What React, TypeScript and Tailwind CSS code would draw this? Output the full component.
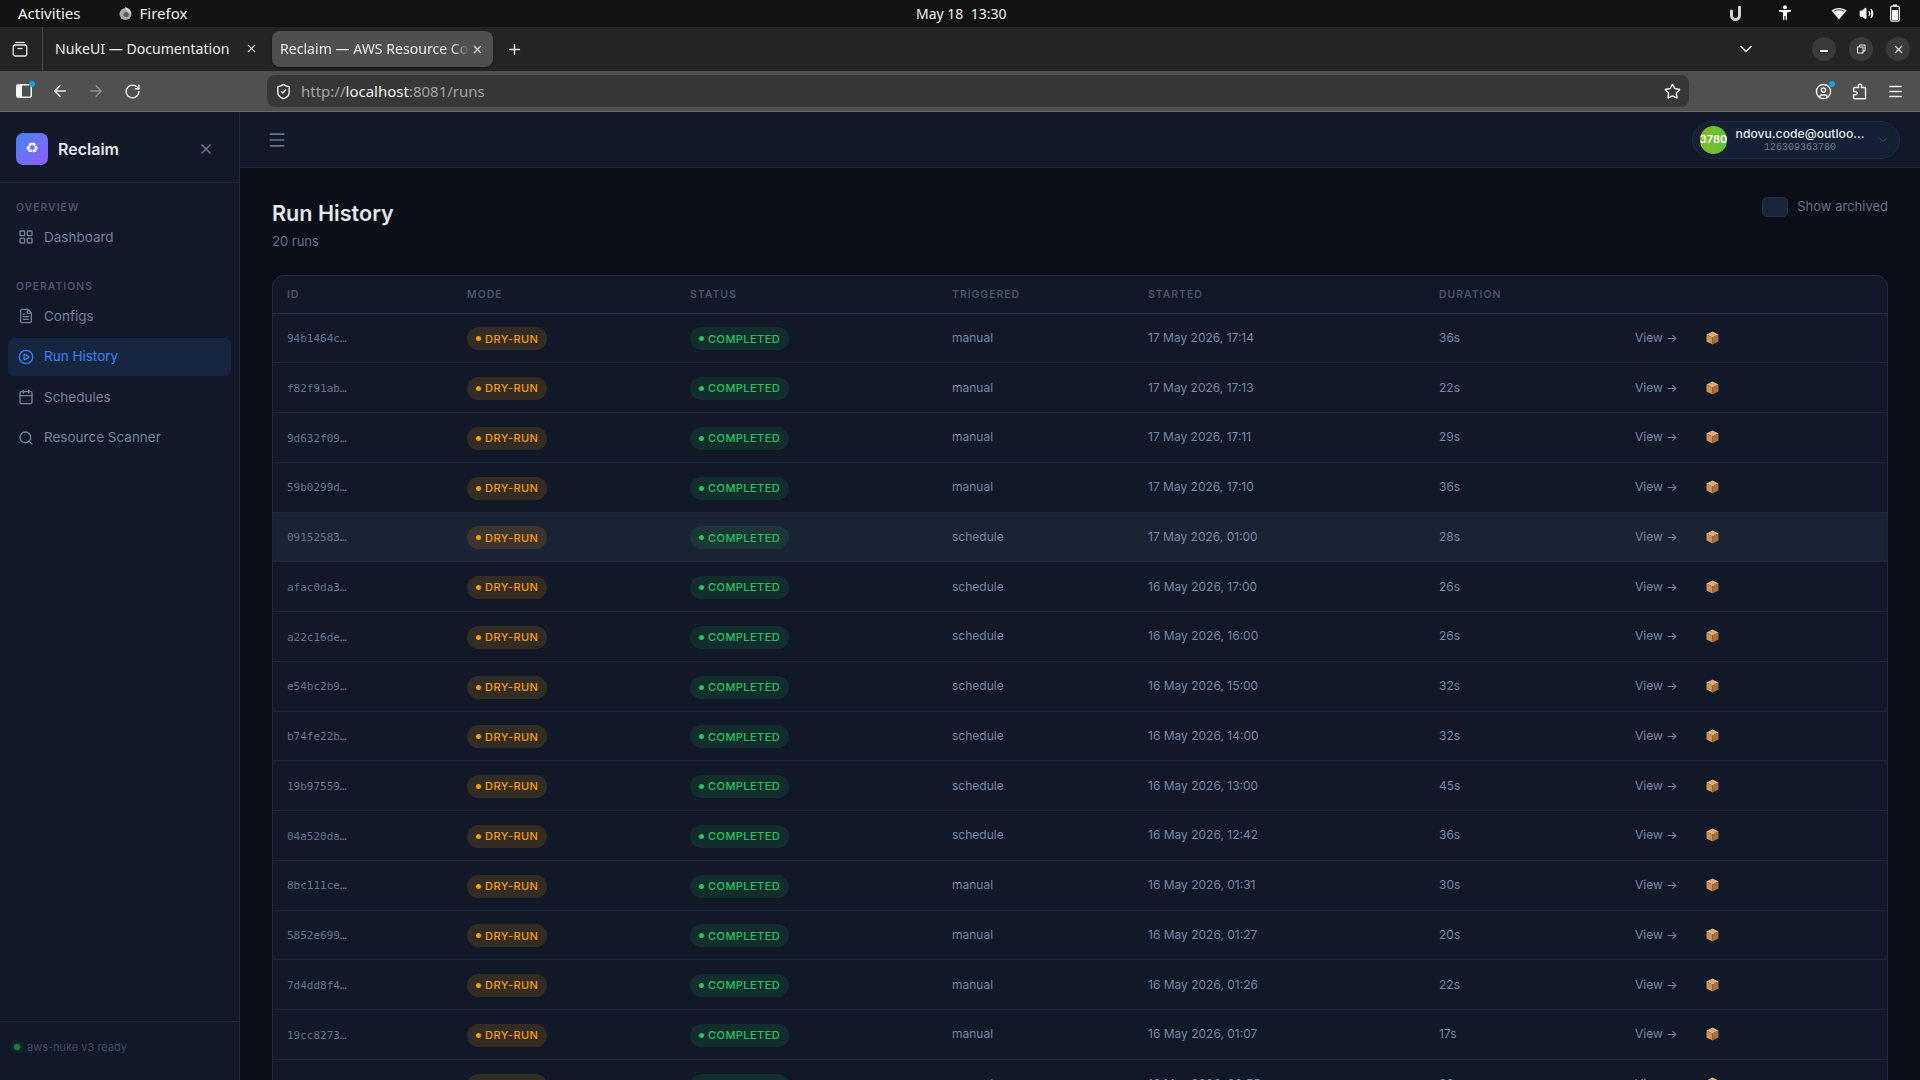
import {
  ArrowLeft,
  ArrowRight,
  Calendar,
  ChevronDown,
  CircleUser,
  FileText,
  LayoutGrid,
  Menu,
  CirclePlay,
  Plus,
  RotateCw,
  Search,
  ShieldCheck,
  Star,
  Volume2,
  X,
} from "lucide-react";

const runs = [
  ["94b1464c…", "manual", "17 May 2026, 17:14", "36s"],
  ["f82f91ab…", "manual", "17 May 2026, 17:13", "22s"],
  ["9d632f09…", "manual", "17 May 2026, 17:11", "29s"],
  ["59b0299d…", "manual", "17 May 2026, 17:10", "36s"],
  ["09152583…", "schedule", "17 May 2026, 01:00", "28s"],
  ["afac0da3…", "schedule", "16 May 2026, 17:00", "26s"],
  ["a22c16de…", "schedule", "16 May 2026, 16:00", "26s"],
  ["e54bc2b9…", "schedule", "16 May 2026, 15:00", "32s"],
  ["b74fe22b…", "schedule", "16 May 2026, 14:00", "32s"],
  ["19b97559…", "schedule", "16 May 2026, 13:00", "45s"],
  ["04a520da…", "schedule", "16 May 2026, 12:42", "36s"],
  ["8bc111ce…", "manual", "16 May 2026, 01:31", "30s"],
  ["5852e699…", "manual", "16 May 2026, 01:27", "20s"],
  ["7d4dd8f4…", "manual", "16 May 2026, 01:26", "22s"],
  ["19cc8273…", "manual", "16 May 2026, 01:07", "17s"],
  ["3e07a1bc…", "manual", "16 May 2026, 00:55", "33s"],
];

function BoxIcon() {
  return (
    <svg width="13" height="14" viewBox="0 0 13 14">
      <path d="M6.5 0.5 12.5 3.5 6.5 6.5 0.5 3.5Z" fill="#e2b183" />
      <path d="M0.5 3.5 6.5 6.5V13.5L0.5 10.5Z" fill="#cf9058" />
      <path d="M12.5 3.5 6.5 6.5V13.5L12.5 10.5Z" fill="#a8703c" />
      <path d="M3.2 2.1 9.2 5.1V6.6L9.8 4.8 3.8 1.8Z" fill="#c48a55" />
    </svg>
  );
}

function SystemBar() {
  return (
    <div className="h-[27px] pb-[1px] bg-[#121212] flex items-center text-[15px] text-[#f2f2f2] relative shrink-0 font-['Noto_Sans']">
      <span className="ml-[18px]">Activities</span>
      <svg className="ml-[37px]" width="15" height="15" viewBox="0 0 15 15">
        <circle cx="7.5" cy="8" r="6" fill="#a8a8a8" />
        <path d="M7 1C10 2 13 4 13 8 11 5 8 5 7 1Z" fill="#e0e0e0" />
        <circle cx="8" cy="8.5" r="2.6" fill="#5c5c5c" />
      </svg>
      <span className="ml-[7px]">Firefox</span>
      <span className="absolute left-[916px] text-[14px] whitespace-pre">May 18  13:30</span>
      <div className="ml-auto flex items-center">
        <svg width="14" height="15" viewBox="0 0 14 15" fill="none">
          <path d="M2.5 5v4.5a4 4 0 0 0 8 0V1" stroke="#d8d3cb" strokeWidth="3" strokeLinecap="round" />
        </svg>
        <svg className="ml-[35px]" width="14" height="16" viewBox="0 0 14 16" fill="#f5f5f5">
          <circle cx="7" cy="2.2" r="2" />
          <path d="M1 5h12v1.6L9 7.4V15H7.6v-4H6.4v4H5V7.4L1 6.6Z" />
        </svg>
        <svg className="ml-[39px]" width="16" height="13" viewBox="0 0 16 13" fill="#f5f5f5">
          <path d="M0.5 3.5C4.5 0 11.5 0 15.5 3.5L8 12.5Z" />
          <path d="M2.8 4.2C6 2.3 10 2.3 13.2 4.2" stroke="#121212" strokeWidth="0.8" fill="none" />
        </svg>
        <Volume2 className="ml-[12px] text-[#f0f0f0]" size={15} fill="#f0f0f0" />
        <svg className="ml-[16px] mr-[20px]" width="10" height="18" viewBox="0 0 10 18" fill="none">
          <rect x="3" y="0.5" width="4" height="2" fill="#f5f5f5" />
          <rect x="0.7" y="2.2" width="8.6" height="15" rx="1.5" stroke="#f5f5f5" strokeWidth="1.2" />
          <rect x="2" y="6" width="6" height="10" fill="#f5f5f5" />
        </svg>
      </div>
    </div>
  );
}

function TabBar() {
  return (
    <div className="h-[44px] bg-[#242424] flex items-center text-[14.1px] text-[#ececec] shrink-0 font-['Noto_Sans']">
      <div className="w-[43px] h-full border-r border-[#4a4a4a] flex items-center justify-center pr-[2px]">
        <svg width="16" height="16" viewBox="0 0 16 16" fill="none" stroke="#e8e8e8" strokeWidth="1.3">
          <path d="M3 1.5h10" />
          <rect x="1.2" y="4" width="13.6" height="11" rx="2" />
          <path d="M5.5 7.5h5" />
        </svg>
      </div>
      <div className="w-[229px] flex items-center pl-[12px] pr-[14px] justify-between">
        <span className="whitespace-nowrap">NukeUI — Documentation</span>
        <X size={13} className="text-[#e4e4e4]" />
      </div>
      <div className="w-[221px] h-[36px] bg-[#4f4f4f] rounded-[8px] flex items-center pl-[8px] pr-[9px] gap-[1px] shadow-[0_1px_2px_rgba(0,0,0,0.4)]">
        <span className="flex-1 whitespace-nowrap overflow-hidden [mask-image:linear-gradient(to_right,black_90%,transparent)]">
          Reclaim — AWS Resource Console
        </span>
        <X size={13} className="text-[#efefef]" />
      </div>
      <Plus size={17} className="ml-[13px] text-[#e8e8e8]" />
      <div className="ml-auto flex items-center">
        <ChevronDown size={20} className="text-[#e4e4e4] mr-[56px]" />
        <div className="w-[24px] h-[24px] rounded-full bg-[#3a3a3a] flex items-center justify-center">
          <div className="w-[8px] h-[1.5px] bg-[#f0f0f0] mt-[4px]" />
        </div>
        <div className="w-[24px] h-[24px] rounded-full bg-[#3a3a3a] ml-[13px] flex items-center justify-center">
          <svg width="10" height="10" viewBox="0 0 10 10" fill="none" stroke="#efefef">
            <rect x="1.5" y="3" width="5.5" height="6" />
            <path d="M3.5 3V1h5.5v6H7" />
          </svg>
        </div>
        <div className="w-[24px] h-[24px] rounded-full bg-[#3a3a3a] ml-[13px] mr-[10px] flex items-center justify-center">
          <X size={13} className="text-[#f0f0f0]" />
        </div>
      </div>
    </div>
  );
}

function Toolbar() {
  return (
    <div className="h-[41px] bg-[#505050] border-b border-[#6a6a6a] flex items-center shrink-0 font-['Noto_Sans'] text-[#f0f0f0]">
      <div className="relative ml-[16px]">
        <svg width="16" height="14" viewBox="0 0 16 14" className="block">
          <rect x="0.75" y="0.75" width="14.5" height="12.5" rx="1.5" fill="none" stroke="#f5f5f5" strokeWidth="1.5" />
          <rect x="1" y="1" width="5" height="12" fill="#f5f5f5" />
        </svg>
        <span className="absolute -top-[3px] -right-[3px] w-[6px] h-[6px] rounded-full bg-[#0ea5e9]" />
      </div>
      <ArrowLeft size={18} className="ml-[19px]" />
      <ArrowRight size={18} className="ml-[18px] text-[#8f8f8f]" />
      <RotateCw size={17} className="ml-[19px]" />
      <div className="ml-[126px] w-[1422px] h-[32px] bg-[#373737] rounded-[8px] flex items-center pl-[8px] pr-[8px]">
        <ShieldCheck size={17} className="text-[#ececec]" />
        <span className="ml-[9px] text-[15px] text-[#a3a3a3] flex-1 whitespace-nowrap">
          http://<span className="text-[#f0f0f0]">localhost</span>:8081/runs
        </span>
        <Star size={17} className="text-[#ececec]" />
      </div>
      <div className="relative ml-[126px]">
        <CircleUser size={17} className="text-[#f0f0f0]" />
        <span className="absolute -top-[2px] -right-[3px] w-[6px] h-[6px] rounded-full bg-[#0ea5e9]" />
      </div>
      <svg className="ml-[20px]" width="15" height="17" viewBox="0 0 15 17" fill="none" stroke="#f0f0f0" strokeWidth="1.4" strokeLinejoin="round">
        <path d="M8 1.2c1.3 0 1.9 1 1.6 2.1-.1.5-.2.9-.2 1.2h4.1v11.2H2.6c-.6 0-1-.4-1-1v-2.9h1.6c1.2 0 1.9-.7 1.9-1.6S4.4 8.6 3.2 8.6H1.6V5.500c0-.6.4-1 1-1h4c0-.4-.1-.8-.2-1.200C6.100 2.200 6.700 1.200 8 1.200Z" />
      </svg>
      <Menu size={17} className="ml-[20px] text-[#f0f0f0]" />
    </div>
  );
}

function NavItem({ icon, label, active }: { icon: React.ReactNode; label: string; active?: boolean }) {
  return (
    <div
      className={`h-[38px] mx-[8px] mb-[2.5px] rounded-[6px] flex items-center pl-[10px] gap-[10px] text-[13.5px] ${
        active ? "bg-[#172640] text-[#3b82f6]" : "text-[#71819a]"
      }`}
    >
      {icon}
      <span>{label}</span>
    </div>
  );
}

function Sidebar() {
  return (
    <aside className="w-[240px] shrink-0 bg-[#111827] border-r border-[#1e293b] flex flex-col">
      <div className="h-[71px] shrink-0 border-b border-[#1e293b] flex items-center pl-[16px] pr-[25px] pt-[3px]">
        <div className="w-[32px] h-[32px] rounded-[7px] bg-gradient-to-br from-[#3b82f6] to-[#8b5cf6] flex items-center justify-center text-white text-[15px] font-['DejaVu_Sans']">
          ♻
        </div>
        <span className="ml-[10px] text-[16px] font-semibold text-[#e2e8f0]">Reclaim</span>
        <X size={16} className="ml-auto text-[#64748b]" strokeWidth={2.5} />
      </div>
      <div className="pt-[18px]">
        <div className="px-[16px] h-[14px] leading-[14px] text-[10.5px] font-semibold tracking-[0.09em] text-[#475569] mb-[3px]">
          OVERVIEW
        </div>
        <NavItem icon={<LayoutGrid size={16} />} label="Dashboard" />
      </div>
      <div className="pt-[21.500px]">
        <div className="px-[16px] h-[14px] leading-[14px] text-[10.5px] font-semibold tracking-[0.09em] text-[#475569] mb-[3px]">
          OPERATIONS
        </div>
        <NavItem icon={<FileText size={16} />} label="Configs" />
        <NavItem icon={<CirclePlay size={16} />} label="Run History" active />
        <NavItem icon={<Calendar size={16} />} label="Schedules" />
        <NavItem icon={<Search size={16} />} label="Resource Scanner" />
      </div>
      <div className="mt-auto h-[59px] border-t border-[#1e293b] flex items-center pl-[14px] gap-[7px] text-[11px] text-[#3f4c61] pb-[8px]">
        <span className="w-[6px] h-[6px] rounded-full bg-[#15803d] shadow-[0_0_5px_#15803d]" />
        aws-nuke v3 ready
      </div>
    </aside>
  );
}

function Badge({ tone, label }: { tone: "amber" | "green"; label: string }) {
  const amber = tone === "amber";
  return (
    <span
      className={`inline-flex align-middle items-center h-[23px] rounded-full pl-[9px] pr-[9px] gap-[4px] text-[11px] font-medium tracking-[0.04em] font-['Inter'] ${
        amber ? "bg-[#f59e0b]/15 text-[#f59e0b]" : "bg-[#22c55e]/12 text-[#22c55e]"
      }`}
    >
      <span className={`w-[5px] h-[5px] rounded-full ${amber ? "bg-[#f59e0b]" : "bg-[#22c55e]"}`} />
      {label}
    </span>
  );
}

function RunTable() {
  return (
    <div className="mt-[26px] rounded-t-[12px] border border-[#1e2a45] bg-[#111827] overflow-hidden">
      <table className="w-full table-fixed border-collapse">
        <colgroup>
          <col className="w-[180px]" />
          <col className="w-[223px]" />
          <col className="w-[262px]" />
          <col className="w-[196px]" />
          <col className="w-[291px]" />
          <col className="w-[196px]" />
          <col />
        </colgroup>
        <thead>
          <tr className="h-[37px] border-b border-[#232f4b]">
            {["ID", "MODE", "STATUS", "TRIGGERED", "STARTED", "DURATION", ""].map((h) => (
              <th key={h} className="pl-[14px] pt-[2px] text-left text-[10.5px] font-semibold tracking-[0.09em] text-[#475569]">
                {h}
              </th>
            ))}
          </tr>
        </thead>
        <tbody>
          {runs.map((r, i) => (
            <tr key={r[0]} className={`h-[49.75px] border-b border-[#1c2741] ${i === 4 ? "bg-[#1a2333]" : ""}`}>
              <td className="pl-[14px] pt-[3px] font-['DejaVu_Sans_Mono'] text-[11px] text-[#64748b]">{r[0]}</td>
              <td className="pl-[14px]">
                <Badge tone="amber" label="DRY-RUN" />
              </td>
              <td className="pl-[14px]">
                <Badge tone="green" label="COMPLETED" />
              </td>
              <td className="pl-[14px] text-[12px] text-[#7487a3]">{r[1]}</td>
              <td className="pl-[14px] text-[12px] text-[#7487a3]">{r[2]}</td>
              <td className="pl-[14px] text-[12px] text-[#7487a3]">{r[3]}</td>
              <td className="pl-[14px]">
                <div className="flex items-center">
                  <span className="w-[71px] text-[12px] text-[#7487a3]">View →</span>
                  <BoxIcon />
                </div>
              </td>
            </tr>
          ))}
        </tbody>
      </table>
    </div>
  );
}

export default function App() {
  return (
    <div className="h-screen w-screen overflow-hidden flex flex-col font-['Inter',sans-serif]">
      <SystemBar />
      <TabBar />
      <Toolbar />
      <div className="flex-1 flex min-h-0">
        <Sidebar />
        <div className="flex-1 flex flex-col min-w-0 bg-[#0a0e17]">
          <header className="h-[56px] shrink-0 bg-[#111827] border-b border-[#1e293b] flex items-center justify-between pl-[27px] pr-[20px]">
            <Menu size={20} className="text-[#64748b]" />
            <div className="w-[208px] h-[38px] rounded-full bg-[#18233a]/70 border border-[#1e2a45] flex items-center pl-[7px] pr-[10px]">
              <div className="w-[27px] h-[28px] rounded-full bg-gradient-to-r from-[#84b825] to-[#5cc43a] flex items-center justify-center text-[11px] font-semibold text-white shrink-0">
                3780
              </div>
              <div className="ml-[8px] w-[130px] text-center leading-none pt-[1px]">
                <div className="text-[12.2px] leading-[14px] font-medium text-[#e2e8f0] whitespace-nowrap">ndovu.code@outloo...</div>
                <div className="mt-[1px] text-[10px] leading-[12px] font-['Liberation_Mono'] text-[#6b7c95]">126309363780</div>
              </div>
              <ChevronDown size={12} className="ml-auto text-[#475569]" />
            </div>
          </header>
          <main className="flex-1 min-h-0 overflow-hidden px-[32px] pt-[31px]">
            <div className="flex justify-between items-start">
              <div>
                <h1 className="text-[21.6px] leading-[28px] font-semibold text-[#e2e8f0]">Run History</h1>
                <p className="mt-[6px] text-[13px] leading-[16px] text-[#64748b]">20 runs</p>
              </div>
              <label className="flex items-center gap-[9px] text-[13px] text-[#64748b] mt-[-2px]">
                <span className="w-[26px] h-[20px] rounded-[5px] bg-[#1b2539] border border-[#243049]" />
                Show archived
              </label>
            </div>
            <RunTable />
          </main>
        </div>
      </div>
    </div>
  );
}
